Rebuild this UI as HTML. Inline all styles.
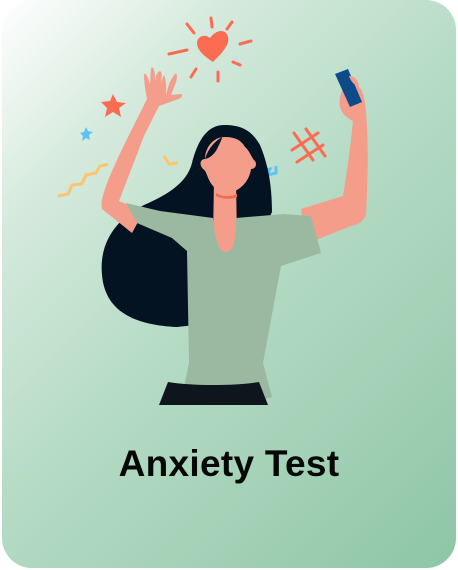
<!DOCTYPE html>
<html><head><style>
html,body{margin:0;padding:0;background:#fff;width:458px;height:570px;overflow:hidden}
.card{position:absolute;left:2px;top:0;width:454px;height:568px;border-radius:30px;background:linear-gradient(135deg,#ffffff 0%,#d6eadd 22%,#b5dbc5 50%,#a3d0b6 75%,#8dc6a6 100%);overflow:hidden}
.t{position:absolute;left:0;width:458px;top:443px;text-align:center;font-family:"Liberation Sans",sans-serif;font-weight:bold;font-size:37px;color:#050807;letter-spacing:0.3px}
svg{position:absolute;left:0;top:0}
</style></head><body>
<div class="card"></div>
<svg width="458" height="570" viewBox="0 0 458 570">
<g stroke="#fb6c53" stroke-width="3" stroke-linecap="round" fill="none">
<path d="M187 24l7 9M211 18l1 9M232 22l-5 7M240 44l11-3M233 62l7 3M218 72l0 9M196 69l-5 8M169 54l18-4"/>
<path d="M294 133l19 27M306 129l19 27M292 150l26-17M297 162l26-17"/>
</g>
<path d="M213 62c-9-6-16-12-16-19c0-6 7-10 13-5c3-4 7-7 11-7c7 0 9 8 6 14c-3 6-8 11-14 17z" fill="#fb6c53"/>
<path d="M113 94l4 8l9 1l-7 5l2 9l-8-5l-8 5l2-9l-6-6l9-1z" fill="#fb6c53"/>
<path d="M86 127l2 4l5 1l-4 3l1 5l-4-2l-4 3l1-5l-3-3l4-1z" fill="#5ec3f2"/>
<g stroke="#fcc46e" stroke-width="3" fill="none" stroke-linejoin="miter">
<path d="M58 196l10-2l4-9l10-1l4-9l10-2l4-7l8-2"/>
<path d="M164 156l5 8l9-1"/>
</g>
<path d="M263 170l7-1l-3 6l9-2l0-7" stroke="#5ec3f2" stroke-width="3" fill="none"/>
<path d="M224 125c-18 0-27 18-32 38c-5 20-25 32-48 42c-30 15-45 40-42 70c3 35 30 50 75 52l45-5l50-110c0-30-5-50-12-67c-8-14-18-20-36-20z" fill="#031322"/>
<path d="M164 75c3 8 2 14 2 20c2-8 4-16 10-22c3 5-2 14-5 22l10-1c3 1 0 5-5 6l-17 6l-15 30l-25 65l25 10l-12 22l-30-24c-3-10 8-35 25-70l20-40c-2-10-3-18-3-25c2-1 4 3 6 10c1-9 0-15 2-17c3 2 3 8 3 15c1-7 2-10 5-11c2 1 2 6 1 14c1-7 3-11 5-12z" fill="#f59d8b"/>
<path d="M345 80c6 0 15 4 18 14c5 15 6 70 3 120c-1 5-5 10-15 12l-45 18l-5-35l42-13c5-30 8-55 10-75c-10-5-15-12-13-24z" fill="#f59d8b"/>
<path d="M335 74l13-5l14 33l-12 5z" fill="#0c4a8a"/>
<path d="M349 76c6 0 9 4 10 10c-4 0-8-4-10-10z" fill="#f59d8b"/>
<path d="M214 180h22l1 60c-1 10-5 15-11 15c-7 0-12-5-13-15z" fill="#f59d8b"/>
<path d="M225 137c-13 0-20 12-20 22c-5 0-6 6-2 10c4 2 4 10 10 17c5 6 13 8 20 6c12-5 17-15 18-23c5 0 6-5 4-8c-3-2-5-10-10-14c-4-7-10-10-20-10z" fill="#f59d8b"/>
<path d="M222 137c-8 5-14 12-17 22c5-1 10-5 13-12c2-4 4-8 4-10z" fill="#031322"/>
<path d="M216 193c6 4 14 4 21 1l0 3c-7 3-15 2-21-1z" fill="#f06b4f"/>
<path d="M126 203l34 8l53 7c2 20 5 34 13 34c8 0 10-14 10-34l48-4l27 2l10 37l-40 13l-18 97l9 34c-18 6-62 6-90 0l7-34l-2-112l-15-13l-35-15z" fill="#9bb9a0"/>
<path d="M168 382c25 4 65 4 91 0l9 23h-109z" fill="#0e151d"/>
</svg>
<div class="t">Anxiety Test</div>
</body></html>
